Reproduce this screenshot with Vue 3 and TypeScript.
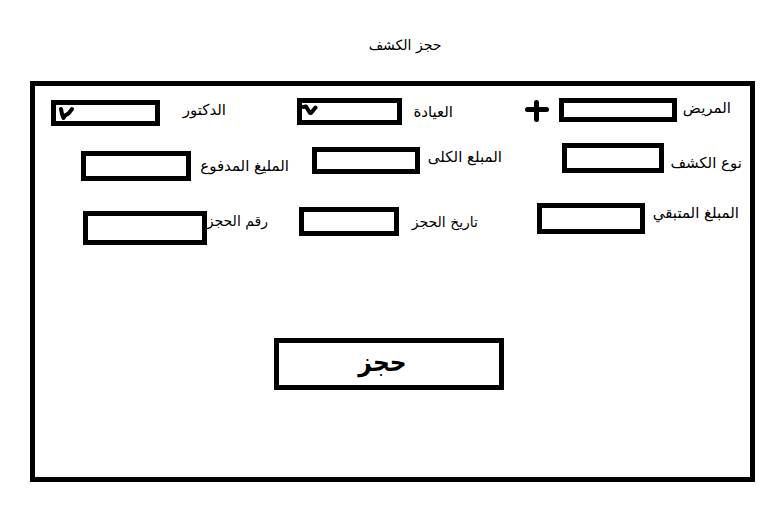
<script setup lang="ts">
import { reactive } from 'vue'

interface Field {
  id: string
  label: string
  kind: 'text' | 'select'
  mark?: string
  addable?: boolean
}

const rows: Field[][] = [
  [
    { id: 'patient', label: 'المريض', kind: 'text', addable: true },
    { id: 'clinic', label: 'العيادة', kind: 'select', mark: 'M2 6 L5 5.5 L9 12 L10 12 L14.5 6.5' },
    { id: 'doctor', label: 'الدكتور', kind: 'select', mark: 'M6 6 L7 11 L8.5 15 L10 12.5 L13.5 10.5 L17 6' },
  ],
  [
    { id: 'type', label: 'نوع الكشف', kind: 'text' },
    { id: 'total', label: 'المبلع الكلى', kind: 'text' },
    { id: 'paid', label: 'المليغ المدفوع', kind: 'text' },
  ],
  [
    { id: 'remaining', label: 'المبلغ المتبقي', kind: 'text' },
    { id: 'date', label: 'تاريخ الحجز', kind: 'text' },
    { id: 'number', label: 'رقم الحجز', kind: 'text' },
  ],
]

const values = reactive<Record<string, string>>({})
rows.flat().forEach((field) => {
  values[field.id] = ''
})
</script>

<template>
  <main class="page" dir="rtl" lang="ar">
    <h1 class="title">حجز الكشف</h1>
    <form class="panel" @submit.prevent>
      <div v-for="(row, index) in rows" :key="index" class="row" :class="`row-${index + 1}`">
        <div v-for="field in row" :key="field.id" class="field" :class="field.id">
          <label class="label" :for="field.id">{{ field.label }}</label>
          <span v-if="field.kind === 'select'" class="control">
            <select :id="field.id" v-model="values[field.id]" class="box">
              <option value=""></option>
            </select>
            <svg class="mark" viewBox="0 0 20 18" aria-hidden="true"><path :d="field.mark" /></svg>
          </span>
          <input v-else :id="field.id" v-model="values[field.id]" class="box control" type="text" />
          <button v-if="field.addable" class="add" type="button">
            <svg viewBox="0 0 24 22" aria-hidden="true"><path d="M2.5 9.5H21.5M11.5 2.5V19.5" /></svg>
          </button>
        </div>
      </div>
      <div class="actions">
        <button class="submit" type="submit">حجز</button>
      </div>
    </form>
  </main>
</template>

<style>
body {
  margin: 0;
  background: #fff;
}
</style>

<style scoped>
.page {
  padding: 32px 15px 30px 30px;
  color: #000;
  font-family: "DejaVu Sans", sans-serif;
  font-size: 14px;
  line-height: 20px;
}
.title {
  margin: 3px 0 26px;
  padding-left: 25px;
  font-size: 14px;
  font-weight: 400;
  text-align: center;
}
.panel {
  border: 5px solid #000;
  padding: 12px 0 87px;
}
.row {
  display: grid;
  align-items: start;
}
.row-1 {
  grid-template-columns: 278fr 227fr 191fr;
  padding-right: 19px;
  min-height: 45px;
}
.row-2 {
  grid-template-columns: 240fr 213fr 254fr;
  padding-right: 8px;
  min-height: 60px;
}
.row-3 {
  grid-template-columns: 261fr 210fr 233fr;
  padding-right: 11px;
}
.field {
  display: flex;
  align-items: flex-start;
}
.label {
  flex: none;
  font-size: 15px;
  white-space: nowrap;
}
.date .label,
.number .label {
  font-size: 14px;
}
.control {
  position: relative;
  flex: none;
}
.box {
  display: block;
  box-sizing: border-box;
  border: 5px solid #000;
  border-radius: 0;
  padding: 0 4px;
  background: #fff;
  color: #000;
  font: inherit;
  appearance: none;
}
select.box {
  width: 100%;
  height: 100%;
}
.mark {
  position: absolute;
  left: 4px;
  top: 3px;
  width: 20px;
  height: 18px;
  pointer-events: none;
}
.mark path,
.add path {
  fill: none;
  stroke: #000;
  stroke-width: 4;
  stroke-linecap: round;
  stroke-linejoin: round;
}
.add path {
  stroke-width: 5;
}
.add {
  margin: 2px 10px 0 0;
  padding: 0;
  border: 0;
  background: none;
}
.add svg {
  display: block;
  width: 24px;
  height: 22px;
}

.clinic,
.paid,
.date {
  align-items: center;
}
.type {
  align-items: flex-end;
}
.total,
.date {
  margin-top: 4px;
}
.doctor {
  margin-top: 2px;
}
.paid,
.number {
  margin-top: 8px;
}

.patient .label { width: 54px; }
.clinic .label { width: 51px; }
.doctor .label { width: 66px; }
.type .label { width: 78px; }
.total .label { width: 82px; }
.paid .label { width: 98px; }
.remaining .label { width: 94px; }
.date .label { width: 79px; }
.number .label { width: 61px; }

.patient .control { width: 118px; height: 24px; }
.clinic .control { width: 105px; height: 27px; }
.doctor .control { width: 109px; height: 26px; }
.type .control { width: 102px; height: 30px; }
.total .control { width: 108px; height: 27px; }
.paid .control { width: 110px; height: 30px; }
.remaining .control { width: 108px; height: 31px; }
.date .control { width: 100px; height: 29px; }
.number .control { width: 124px; height: 34px; }

.actions {
  display: flex;
  justify-content: center;
  margin-top: 93px;
  padding-right: 8px;
}
.submit {
  box-sizing: border-box;
  width: 230px;
  height: 52px;
  border: 5px solid #000;
  border-radius: 0;
  padding: 0 12px 4px 0;
  background: #fff;
  color: #000;
  font-family: "DejaVu Sans Condensed", "DejaVu Sans", sans-serif;
  font-size: 26px;
  font-weight: 700;
  line-height: 36px;
}
</style>
